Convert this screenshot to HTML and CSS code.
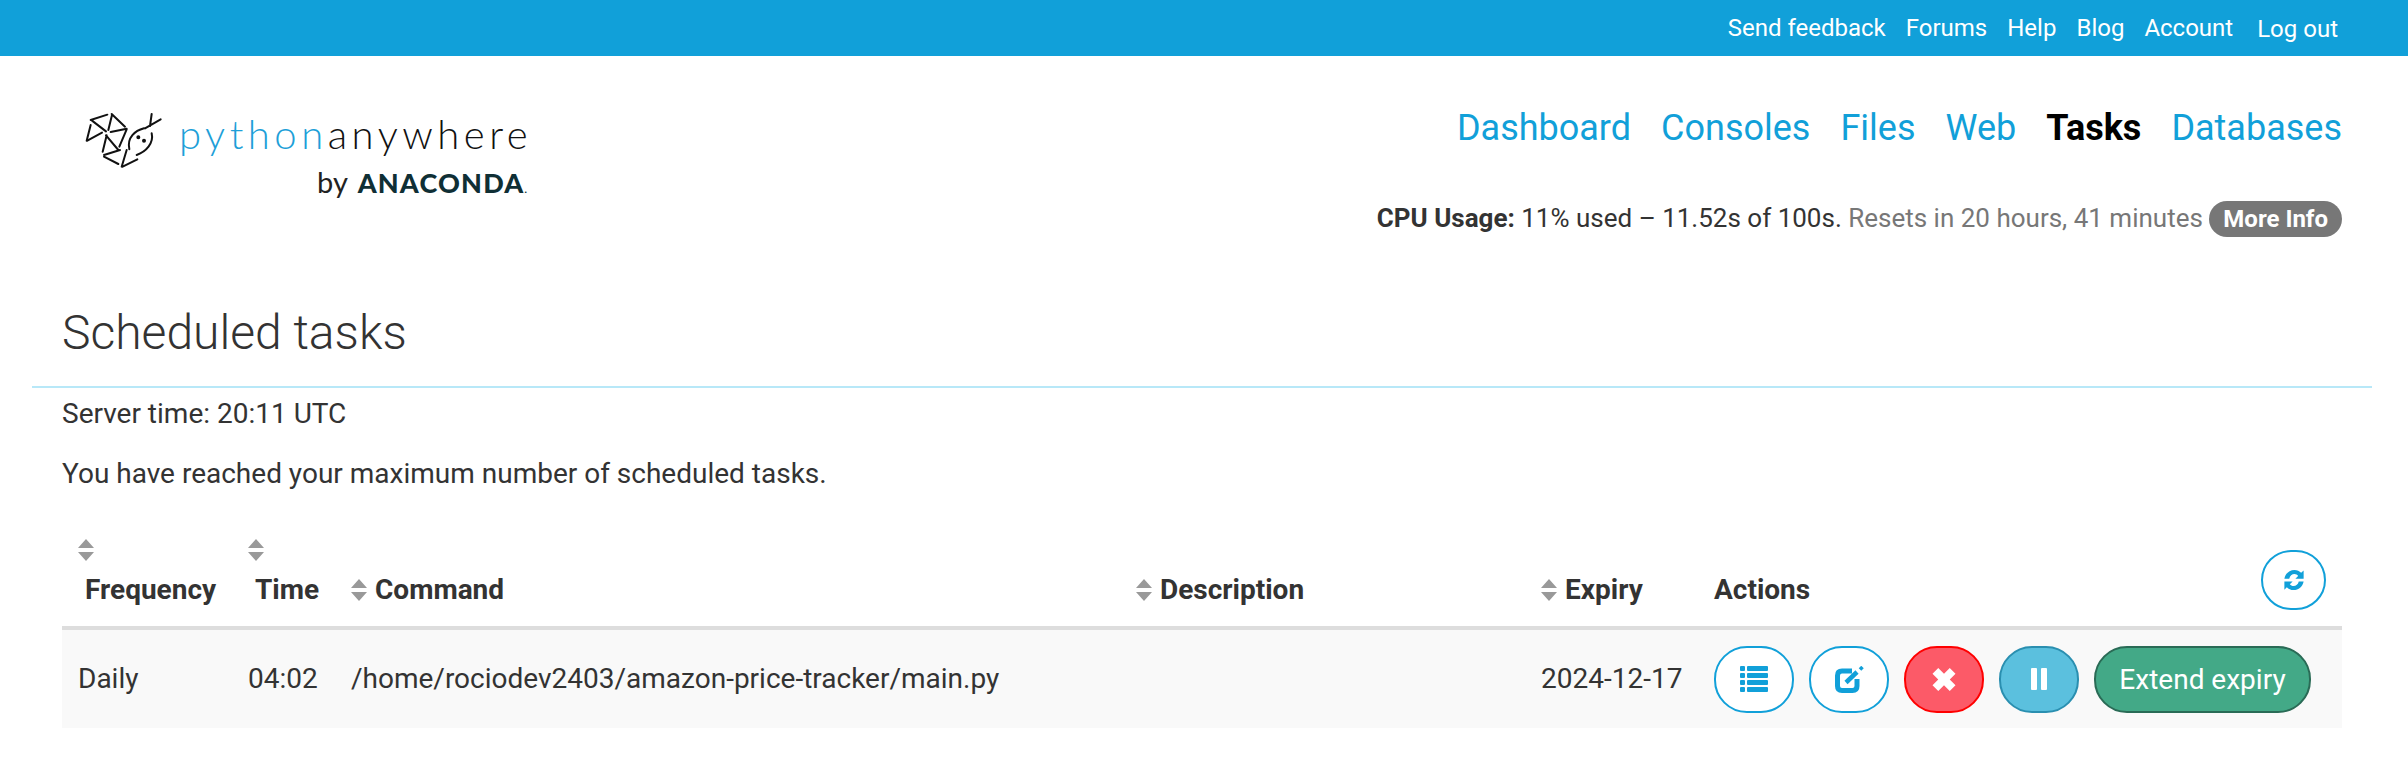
FILE: index.html
```html
<!DOCTYPE html>
<html>
   <head>
        <meta charset="UTF-8">
        <link rel="stylesheet" href="styles.css">
   </head>
   <body>
        <div class="topbar">
            <a href="#">Send feedback</a>
            <a href="#">Forums</a>
            <a href="#">Help</a>
            <a href="#">Blog</a>
            <a href="#">Account</a>
            <a href="#" class="logout">Log out</a>
        </div>

        <div class="header">
            <div class="logo">
                <svg class="logoMark" viewBox="0 0 330 240" width="110" height="80" fill="none" stroke="#111" stroke-width="6" stroke-linecap="round">
                    <path d="M62 60L112 44M66 62L108 94M62 75L50 122M52 122L96 98"/>
                    <path d="M125 42L165 80M126 45L115 90M122 96L170 86M170 88L148 140"/>
                    <path d="M108 106L145 150M110 106L98 155M102 165L150 150M102 170L145 192"/>
                    <path d="M170 150L155 200M158 200L202 178"/>
                    <path d="M222 85C196 92 170 112 178 148M245 100C252 130 228 155 200 165"/>
                    <path d="M245 42L240 78M272 58L225 85"/>
                    <circle cx="205" cy="112" r="3" fill="#111"/>
                    <circle cx="222" cy="122" r="3" fill="#111"/>
                </svg>
                <div class="logoText">
                    <div class="logoName"><span class="logoBlue">python</span>anywhere</div>
                    <div class="logoBy">by <span class="logoAnaconda">ANACONDA<small>.</small></span></div>
                </div>
            </div>
            <div class="headerRight">
                <nav class="mainNav">
                    <a href="#">Dashboard</a>
                    <a href="#">Consoles</a>
                    <a href="#">Files</a>
                    <a href="#">Web</a>
                    <a href="#" class="active">Tasks</a>
                    <a href="#">Databases</a>
                </nav>
                <div class="cpu">
                    <b>CPU Usage:</b> 11% used – 11.52s of 100s.
                    <span class="cpuReset">Resets in 20 hours, 41 minutes</span>
                    <a href="#" class="moreInfo">More Info</a>
                </div>
            </div>
        </div>

        <h1 class="pageTitle">Scheduled tasks</h1>
        <div class="content">
            <p class="serverTime">Server time: 20:11 UTC</p>
            <p class="limitMsg">You have reached your maximum number of scheduled tasks.</p>

            <table class="tasksTable">
                <colgroup>
                    <col class="colFreq">
                    <col class="colTime">
                    <col class="colCommand">
                    <col class="colDesc">
                    <col class="colExpiry">
                    <col>
                </colgroup>
                <thead>
                    <tr>
                        <th><svg class="sortIcon wrapped" viewBox="0 0 16 22"><path d="M8 0L16 9H0ZM0 13H16L8 22Z"/></svg><span class="wrappedLabel">Frequency</span></th>
                        <th><svg class="sortIcon wrapped" viewBox="0 0 16 22"><path d="M8 0L16 9H0ZM0 13H16L8 22Z"/></svg><span class="wrappedLabel">Time</span></th>
                        <th><svg class="sortIcon" viewBox="0 0 16 22"><path d="M8 0L16 9H0ZM0 13H16L8 22Z"/></svg>Command</th>
                        <th><svg class="sortIcon" viewBox="0 0 16 22"><path d="M8 0L16 9H0ZM0 13H16L8 22Z"/></svg>Description</th>
                        <th><svg class="sortIcon" viewBox="0 0 16 22"><path d="M8 0L16 9H0ZM0 13H16L8 22Z"/></svg>Expiry</th>
                        <th>
                            <div class="actionsHead">
                                Actions
                                <button class="btn btnRefresh">
                                    <svg viewBox="0 0 24 24" width="22" height="22" fill="#11a0d9">
                                        <path d="M1.500 10.500C2.500 5 7 1 12.500 1C15.500 1 18 2.300 19.800 4.200L22.500 1.500V10.500H13.500L16.500 7.500C15.500 6.300 14.200 5.500 12.500 5.500C9.800 5.500 7.500 7.500 6.800 10.500Z"/>
                                        <path d="M22.500 13.500C21.500 19 17 23 11.500 23C8.500 23 6 21.700 4.200 19.800L1.500 22.500V13.500H10.500L7.500 16.500C8.500 17.700 9.800 18.500 11.500 18.500C14.200 18.500 16.500 16.500 17.200 13.500Z"/>
                                    </svg>
                                </button>
                            </div>
                        </th>
                    </tr>
                </thead>
                <tbody>
                    <tr>
                        <td>Daily</td>
                        <td>04:02</td>
                        <td>/home/rociodev2403/amazon-price-tracker/main.py</td>
                        <td></td>
                        <td>2024-12-17</td>
                        <td>
                            <div class="actions">
                                <button class="btn btnOutline">
                                    <svg viewBox="0 0 28 26" width="28" height="26" fill="#11a0d9">
                                        <rect x="0" y="0" width="5" height="5" rx="1"/><rect x="7" y="0" width="21" height="5" rx="1"/>
                                        <rect x="0" y="7" width="5" height="5" rx="1"/><rect x="7" y="7" width="21" height="5" rx="1"/>
                                        <rect x="0" y="14" width="5" height="5" rx="1"/><rect x="7" y="14" width="21" height="5" rx="1"/>
                                        <rect x="0" y="21" width="5" height="5" rx="1"/><rect x="7" y="21" width="21" height="5" rx="1"/>
                                    </svg>
                                </button>
                                <button class="btn btnOutline">
                                    <svg viewBox="0 0 29 27" width="29" height="27" fill="none" stroke="#11a0d9">
                                        <path d="M17 5H7C4 5 2.500 6.500 2.500 9.500V20C2.500 23 4 24.500 7 24.500H17.500C20.500 24.500 22 23 22 20V13" stroke-width="5"/>
                                        <path d="M11 16.500L22 6" stroke-width="4.500"/>
                                        <path d="M25 1L27.500 3.500" stroke-width="3.500"/>
                                    </svg>
                                </button>
                                <button class="btn btnDanger">
                                    <svg viewBox="0 0 24 24" width="24" height="23" fill="#fff">
                                        <path d="M6 0L12 6L18 0L24 6L18 12L24 18L18 24L12 18L6 24L0 18L6 12L0 6Z"/>
                                    </svg>
                                </button>
                                <button class="btn btnInfo">
                                    <svg viewBox="0 0 16 22" width="16" height="22" fill="#fff">
                                        <rect x="0" y="0" width="6" height="22" rx="1"/><rect x="10" y="0" width="6" height="22" rx="1"/>
                                    </svg>
                                </button>
                                <button class="btn btnSuccess">Extend expiry</button>
                            </div>
                        </td>
                    </tr>
                </tbody>
            </table>
        </div>
    </body>
</html>
```

FILE: styles.css
```css
* {
    box-sizing: border-box;
}

body {
    margin: 0;
    background-color: white;
    color: #333;
    font-family: Roboto, "Liberation Sans", sans-serif;
    font-size: 28px;
    line-height: 38px;
}

a {
    text-decoration: none;
}

.topbar {
    display: flex;
    justify-content: flex-end;
    align-items: center;
    gap: 20px;
    height: 56px;
    padding-right: 70px;
    background-color: #11a0d9;
}

.topbar a {
    color: white;
    font-size: 24px;
}

.topbar .logout {
    margin-left: 4px;
    padding-top: 2px;
}

.header {
    display: flex;
    justify-content: space-between;
    padding: 44px 66px 0 70px;
}

.logo {
    display: flex;
}

.logoText {
    margin-left: -1px;
}

.logoName {
    font-family: Lato, sans-serif;
    font-weight: 300;
    font-size: 40px;
    line-height: 44px;
    letter-spacing: 4.500px;
    color: #111;
    margin-top: 12px;
}

.logoBlue {
    color: #1e9fd8;
}

.logoBy {
    text-align: right;
    font-family: Lato, sans-serif;
    font-size: 29px;
    line-height: 30px;
    margin-top: 11px;
    padding-right: 4px;
    color: #222;
}

.logoAnaconda {
    margin-left: 3px;
    font-size: 27px;
    font-weight: 900;
    letter-spacing: 1.200px;
    color: #0f2f35;
}

.logoAnaconda small {
    font-size: 10px;
}

.headerRight {
    text-align: right;
}

.mainNav {
    display: flex;
    justify-content: flex-end;
    gap: 30px;
    margin-top: 3px;
    font-size: 36px;
    line-height: 50px;
}

.mainNav a {
    color: #11a0d9;
}

.mainNav .active {
    color: black;
    font-weight: bold;
}

.cpu {
    margin-top: 46px;
    font-size: 26px;
    line-height: 38px;
}

.cpuReset {
    color: #777;
}

.moreInfo {
    display: inline-block;
    padding: 0 14px;
    border-radius: 18px;
    background-color: #777;
    color: white;
    font-size: 24px;
    font-weight: bold;
    line-height: 36px;
}

.pageTitle {
    margin: 0 36px 0 32px;
    padding: 70px 30px 27px 30px;
    border-bottom: 2px solid #b8e8f8;
    font-size: 48px;
    font-weight: 300;
    line-height: 52px;
}

.content {
    padding: 0 66px 0 62px;
}

.serverTime {
    margin: 7px 0 0;
}

.limitMsg {
    margin: 22px 0 0;
}

.tasksTable {
    width: 100%;
    margin-top: 46px;
    border-collapse: collapse;
    table-layout: fixed;
}

.colFreq {
    width: 170px;
}

.colTime {
    width: 103px;
}

.colCommand {
    width: 785px;
}

.colDesc {
    width: 405px;
}

.colExpiry {
    width: 173px;
}

.tasksTable th {
    padding: 0 16px 17px;
    border-bottom: 4px solid #ddd;
    text-align: left;
    vertical-align: bottom;
    font-weight: bold;
}

.tasksTable td {
    height: 100px;
    padding: 0 16px;
    background-color: #f9f9f9;
    white-space: nowrap;
}

.sortIcon {
    width: 16px;
    height: 22px;
    margin-right: 8px;
    vertical-align: -2px;
    fill: #999;
}

.sortIcon.wrapped {
    display: block;
    margin-bottom: 10px;
}

.wrappedLabel {
    margin-left: 7px;
}

.actionsHead {
    display: flex;
    justify-content: space-between;
    align-items: flex-end;
}

.actions {
    display: flex;
    gap: 15px;
}

.btn {
    display: flex;
    align-items: center;
    justify-content: center;
    width: 80px;
    height: 67px;
    padding: 0;
    border: 2px solid #11a0d9;
    border-radius: 33px;
    background-color: white;
    color: white;
    font-family: Roboto, sans-serif;
    font-size: 28px;
    cursor: pointer;
}

.btnRefresh {
    width: 65px;
    height: 60px;
    margin-bottom: -1px;
}

.btnDanger {
    background-color: #fc5a68;
    border-color: #f00;
}

.btnInfo {
    background-color: #5bc0de;
    border-color: #2a8fb0;
}

.btnSuccess {
    width: 217px;
    background-color: #43a987;
    border-color: #2a6b56;
}
```
